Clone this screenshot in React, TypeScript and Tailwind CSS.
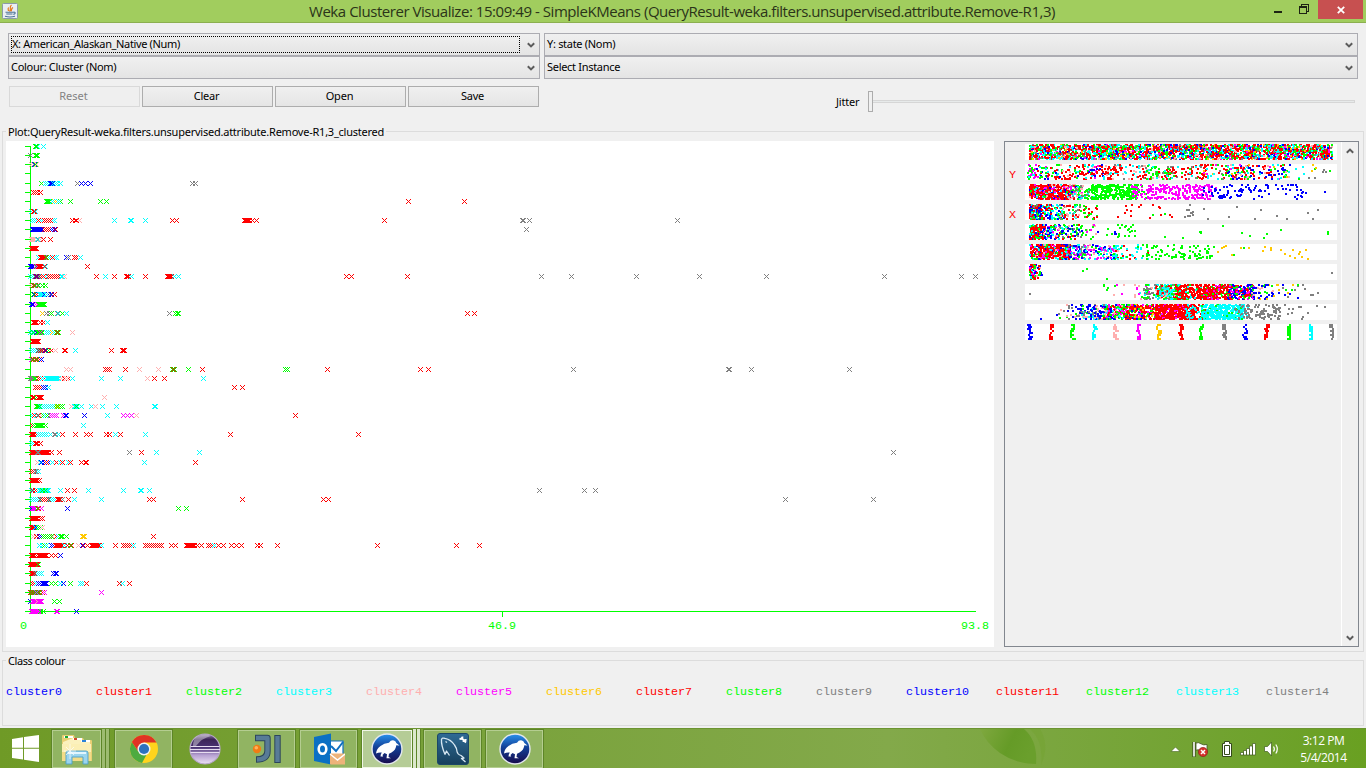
import React from 'react';

const COLOURS: Record<string, string> = {
  b: '#0000ff',
  r: '#ff0000',
  g: '#00ff00',
  c: '#00ffff',
  p: '#ffafaf',
  m: '#ff00ff',
  y: '#ffc800',
  k: '#808080',
};

// One entry per state. A letter is a colour; "c31-45" is a run with a step of 2, "r31~36" a solid run.
const ROWS: string[] = [
  'c37g35g36c43',
  'k30g35~37',
  'p31p33g35b34p36',
  '',
  'g41c45-49b50~52c53-57c60k77b81b85b90k192k195',
  'r33-37r40',
  'g46~49y54y56c52g60c58g70g100g106r408r464',
  'c31r33r34c35',
  'c32-54r38r44-51r72r75r76p79c114c130c131c145r172r176r244~249r252r256r384k522k523k529k677',
  'b32~42b46-54r44-48r55k526',
  'p31~34c37k38p40r43r50',
  'r31~36',
  'c38r40~45c48-57r52g46b66k68r74r76c80',
  'b30~33m35g36m37r38~41r44c45r87',
  'c30-38b36r35-41c45r43r48-58c61c62p64r96c105r114r126~128c131r145r167~170r171c174c178r346r351r407k541k571k636k699k766k884k961k975',
  'p31r33-36g34g38k37g42g45',
  'g33b34r36c39~43b44-48c46k50b51g54r54',
  'b31-35m35m37g38~44b32',
  'y42k46k49g51k57c58g62c66k169g175g177g178r467r474',
  'r33~36r40r43c47',
  'c30-38b36g33g37~42m40c46-50y52c54g56r57g58p72',
  'r32~38',
  'c31-39r38-47k41b45g48r51p55r64r65c75r111r122~124',
  'm31r33-39g32g36b41',
  'p66p70r105r107r109r125p139p158r173g172g174g188r202g285g287r327r420r428k573k728k729k751k849',
  'k30~33g35g34r38-44c42c46~58p61r64r68p66c72c101c120p147r154r164c203',
  'r35-43b43b45c48r234r242',
  'r32~34g36r38~41p104',
  'g36~40g42-58c40-52y57g62g60p71c74~77g76c81c91p95c102c116c154c155',
  'c32r34r38c37p41g43c45g47m50-57b66m63b65b84c107m123m127m131p136r295',
  'r32-38g34r40g36~42g45c83',
  'r31~34r36-47c38-46c50k54k55c58r62r75r86r90r106r109c115r120c145r230r358',
  'c31c33r35~37r40',
  'r31~48k37k38r51r59k129r141c156c199k893',
  'p37c40b41b44-48r46c52r56c60r62c68r70r81r85r86c144r195',
  'r31r33k35k36c38',
  'r31~37r39',
  'c31-37r32r35c39~48g42g45c60r67r74c88c123c140c141c149k539k584k595',
  'c31-39r40-48c49-55r57~60k62r68c74c101r149r153r242r323r328k785k873',
  'b31m32~35g37r38m41b67g178g186',
  'r31~37r40r42',
  'r31~34b36c35g38g40p42',
  'p33r36b39b41g43-51p52r56c58g60~62g66y82y83y84r153',
  'c39c42g44c46b51b53r55~62c64r67g70r71p78b82r83r87r91~99c101r115r123-134c133r145-161r171r175r186~194r197r201r208r210r212c214r218r223r231r236r241r257r260r277r377r456r479',
  'r31~34r36-40r39~46r51r55b60',
  'r30~37g38',
  'r31~34k35c37-42b53b55b56',
  'r32r34c36-42b38-47b43~46g51g55c60b63g70c80c82r86r119c122r129',
  'r30-38g31-39m36r42m44m101',
  'b30m32~36p37m38~41g54g59',
  'm31~38g40m39g43m56m57b76',
];

function expand(row: string): [string, number][] {
  const out: [string, number][] = [];
  for (const m of row.matchAll(/([a-z])(\d+)(?:([-~])(\d+))?/g)) {
    const from = Number(m[2]);
    const to = m[4] ? Number(m[4]) : from;
    const step = m[3] === '-' ? 2 : 1;
    for (let x = from; x <= to; x += step) out.push([m[1], x]);
  }
  return out;
}

const rowY = (i: number) => Math.floor(146.02 + i * 9.3);

function crossPath(x: number, y: number) {
  let d = '';
  for (let k = -2; k <= 2; k++) {
    d += `M${x + k} ${y + k}h1v1h-1z`;
    if (k !== 0) d += `M${x + k} ${y - k}h1v1h-1z`;
  }
  return d;
}

function Plot() {
  return (
    <svg className="block h-[506px] w-[988px] shrink-0 bg-white" viewBox="6 141 988 506" shapeRendering="crispEdges">
      <g fill="#00ff00">
        <rect x="30" y="146" width="1" height="466" />
        <rect x="30" y="611" width="946" height="1" />
        <rect x="502" y="611" width="1" height="6" />
        {ROWS.map((_, i) => (
          <rect key={i} x="25" y={rowY(i)} width="6" height="1" />
        ))}
      </g>
      {ROWS.map((row, i) => expand(row).map(([c, x], j) => <path key={`${i}-${j}`} fill={COLOURS[c]} d={crossPath(x, rowY(i))} />))}
      <g fill="#00ff00" fontFamily="'Liberation Mono', monospace" fontSize="11.7">
        <text x="20" y="629">0</text>
        <text x="488" y="629">46.9</text>
        <text x="961" y="629">93.8</text>
      </g>
    </svg>
  );
}

type Segment = [number, number, number, string];

const STRIPS: { label?: string; seed: number; segments: Segment[] }[] = [
  { seed: 3, segments: [[4, 308, 2400, 'rrrrrrrrccccgggbbmkpy']] },
  {
    label: 'Y',
    seed: 11,
    segments: [
      [2, 12, 30, 'mmmggc'], [10, 24, 28, 'gggbmrc'], [22, 70, 100, 'rrrrrccpgb'], [64, 80, 34, 'bmrcrr'], [76, 125, 95, 'rrrrcckp'],
      [118, 150, 60, 'gggrrckp'], [140, 182, 80, 'rrrrrcgk'], [178, 225, 80, 'ggcrrymk'], [200, 262, 90, 'rrrcpgmbb'], [244, 276, 22, 'rcgpyb'], [276, 308, 12, 'gckyc'],
    ],
  },
  {
    seed: 23,
    segments: [
      [4, 44, 400, 'rrrrrrrrrcpmgb'], [40, 58, 80, 'mgcpkbr'], [50, 72, 60, 'gggpck'], [66, 114, 260, 'g'], [106, 128, 50, 'mmmgm'],
      [124, 188, 190, 'm'], [176, 192, 12, 'mb'], [186, 245, 58, 'b'], [245, 282, 22, 'b'], [298, 301, 1, 'b'],
    ],
  },
  {
    label: 'X',
    seed: 37,
    segments: [[4, 16, 130, 'ggcrrkb'], [14, 40, 110, 'crrbcbg'], [34, 56, 52, 'rrcgkp'], [54, 78, 26, 'rrrg'], [80, 150, 18, 'rrrrrrg'], [158, 184, 12, 'k'], [184, 308, 9, 'k']],
  },
  {
    seed: 41,
    segments: [[4, 20, 160, 'rrrrrgcb'], [18, 36, 90, 'bbrpgcm'], [34, 58, 75, 'bbgggprkc'], [56, 72, 16, 'ppggm'], [72, 100, 8, 'gbg'], [92, 112, 18, 'g'], [110, 308, 13, 'g']],
  },
  {
    seed: 53,
    segments: [[4, 46, 400, 'rrrrrrrbcgpm'], [40, 62, 95, 'bbccgkm'], [58, 94, 120, 'bcccbgpm'], [88, 124, 44, 'cccggr'], [120, 190, 80, 'g'], [190, 225, 9, 'yyg'], [235, 286, 14, 'y']],
  },
  { seed: 61, segments: [[4, 11, 70, 'rrgcbgm'], [9, 18, 24, 'bbgpr'], [56, 59, 1, 'g'], [61, 64, 1, 'g'], [81, 84, 1, 'g'], [306, 309, 1, 'k']] },
  {
    seed: 71,
    segments: [
      [4, 6, 1, 'k'], [78, 112, 9, 'pggm'], [108, 126, 18, 'pgmpc'], [118, 150, 105, 'kkkpcg'], [130, 162, 155, 'cccrrgp'], [150, 182, 240, 'rrrrrrcg'],
      [178, 208, 240, 'rrrrrgmr'], [202, 230, 160, 'bbbrgrm'], [226, 250, 44, 'bbggyp'], [248, 276, 20, 'bbgyk'], [276, 308, 5, 'k'],
    ],
  },
  {
    seed: 83,
    segments: [
      [4, 40, 6, 'gbkp'], [38, 60, 26, 'bbgpk'], [54, 86, 125, 'bbbbgpkc'], [78, 106, 200, 'gggrbmpc'], [100, 136, 260, 'rrrmbrgy'], [130, 170, 440, 'rrrrrrrrm'],
      [160, 182, 100, 'rrcc'], [176, 220, 330, 'cccccccccccccccg'], [208, 226, 34, 'ckkc'], [216, 256, 80, 'k'], [256, 304, 12, 'k'],
    ],
  },
  {
    seed: 97,
    segments: [],
  },
];

function random(seed: number) {
  let a = seed * 7919;
  return () => {
    a = (a + 0x6d2b79f5) | 0;
    let t = Math.imul(a ^ (a >>> 15), 1 | a);
    t = (t + Math.imul(t ^ (t >>> 7), 61 | t)) ^ t;
    return ((t ^ (t >>> 14)) >>> 0) / 4294967296;
  };
}

function stripDots(index: number): [string, number, number][] {
  const { seed, segments } = STRIPS[index];
  const rnd = random(seed);
  const dots: [string, number, number][] = [];
  for (const [from, to, count, palette] of segments) {
    for (let n = 0; n < count; n++) {
      dots.push([palette[Math.floor(rnd() * palette.length)], Math.floor(from + rnd() * (to - from - 1)), Math.floor(rnd() * 15)]);
    }
  }
  if (segments.length === 0) {
    'brgcpmyrgkbrgck'.split('').forEach((c, i) => {
      const x = 4 + Math.round(i * 21.5);
      let drift = 0;
      for (let y = 0; y < 16; y += 2) {
        drift = Math.max(-2, Math.min(2, drift + Math.floor(rnd() * 5) - 2));
        dots.push([c, x + drift, y]);
        if (rnd() > 0.45) dots.push([c, x + (drift > 0 ? drift - 2 : drift + 2), y]);
      }
    });
  }
  return dots;
}

function Strip({ index }: { index: number }) {
  const byColour = new Map<string, string>();
  const order: React.ReactNode[] = [];
  stripDots(index).forEach(([c, x, y], i) => {
    byColour.set(c, (byColour.get(c) ?? '') + `M${x} ${y}h2v2h-2z`);
    if (i % 25 === 24) {
      byColour.forEach((d, k) => order.push(<path key={`${i}${k}`} fill={COLOURS[k]} d={d} />));
      byColour.clear();
    }
  });
  byColour.forEach((d, k) => order.push(<path key={`end${k}`} fill={COLOURS[k]} d={d} />));
  return (
    <div className="flex h-5 items-start">
      <span className="w-5 pl-1 pt-[4px] font-['Liberation_Mono',monospace] text-[11.7px] leading-[15px] text-[#ff0000]">{STRIPS[index].label}</span>
      <svg className="block h-4 w-[312px] bg-white" viewBox="0 0 312 16" shapeRendering="crispEdges">
        {order}
      </svg>
    </div>
  );
}

function Chevron({ up }: { up?: boolean }) {
  return (
    <svg className="block h-[6px] w-[8px]" viewBox="0 0 8 6">
      <path d={up ? 'M0.8 4.8L4 1.6L7.2 4.8' : 'M0.8 1.2L4 4.4L7.2 1.2'} fill="none" stroke="#5c5c5c" strokeWidth="2" />
    </svg>
  );
}

function Combo({ text, focused }: { text: string; focused?: boolean }) {
  return (
    <div className="flex h-[23px] items-center justify-between border border-[#acacb2] bg-linear-to-b from-[#f0f0f0] to-[#e4e4e4] pl-[2px] pr-[4px]">
      <span
        className={
          focused
            ? 'mr-[7px] h-[17px] flex-1 border border-dotted border-black text-[11px] leading-[13px] tracking-[-0.36px]'
            : 'h-[17px] flex-1 text-[11px] leading-[15px] tracking-[-0.3px]'
        }
      >
        {text}
      </span>
      <Chevron />
    </div>
  );
}

function Button({ text, disabled }: { text: string; disabled?: boolean }) {
  return (
    <button
      className={
        disabled
          ? 'h-[21px] w-[131px] border border-[#d9d9d9] bg-[#efefef] pr-[2px] pb-[2px] text-[11px] leading-[17px] text-[#838383]'
          : 'h-[21px] w-[131px] border border-[#adadad] bg-linear-to-b from-[#f0f0f0] to-[#e5e5e5] pr-[2px] pb-[2px] text-[11px] leading-[17px] tracking-[-0.2px] text-black'
      }
    >
      {text}
    </button>
  );
}

const CLUSTERS: [string, string][] = [
  ['cluster0', 'text-[#0000ff]'], ['cluster1', 'text-[#ff0000]'], ['cluster2', 'text-[#00ff00]'], ['cluster3', 'text-[#00ffff]'], ['cluster4', 'text-[#ffafaf]'],
  ['cluster5', 'text-[#ff00ff]'], ['cluster6', 'text-[#ffc800]'], ['cluster7', 'text-[#ff0000]'], ['cluster8', 'text-[#00ff00]'], ['cluster9', 'text-[#808080]'],
  ['cluster10', 'text-[#0000ff]'], ['cluster11', 'text-[#ff0000]'], ['cluster12', 'text-[#00ff00]'], ['cluster13', 'text-[#00ffff]'], ['cluster14', 'text-[#808080]'],
];

function JavaIcon() {
  return (
    <svg className="h-4 w-4" viewBox="0 0 16 16">
      <rect x=".5" y=".5" width="15" height="15" rx="1" fill="#e9eef3" stroke="#8b9aa8" />
      <path d="M9.5 2C6.5 4.5 10 5 7.5 8.5M11 4.5C8.5 6 10.5 6.5 8.8 8.3M6.6 4.5C5.5 6 6.5 6.5 6.4 8" fill="none" stroke="#e67817" strokeWidth="1.2" />
      <path d="M3.5 9.3h8M4.3 11h6.2M3 13.2c3 .9 7 .9 10 0M11.5 9.2c2.6-.4 2 2-.3 2" fill="none" stroke="#4b7396" strokeWidth="1.1" />
    </svg>
  );
}

function TitleBar() {
  return (
    <header className="relative flex h-[23px] items-start border-b border-[#8cb050] bg-[#a1cd5e]">
      <div className="pl-[2px] pt-[3px]">
        <JavaIcon />
      </div>
      <h1 className="w-[1330px] pl-[291px] font-['Open_Sans',sans-serif] text-[15px] leading-[23px] tracking-[-0.452px] whitespace-nowrap text-[#2b3419]">
        Weka Clusterer Visualize: 15:09:49 - SimpleKMeans (QueryResult-weka.filters.unsupervised.attribute.Remove-R1,3)
      </h1>
      <div className="absolute top-0 right-[3px] flex h-[19px]">
        <svg className="block h-[19px] w-[48px]" viewBox="0 0 48 19" shapeRendering="crispEdges">
          <path d="M4 11h8v2h-8z" fill="#1d2413" />
          <path d="M29 6h7v7h-7zM31 6v-2h7v7h-2" transform="translate(.5 .5)" fill="none" stroke="#1d2413" />
          <path d="M29 6h8v2h-8z" fill="#1d2413" />
        </svg>
        <div className="flex h-[19px] w-[45px] items-center justify-center bg-[#c75050]">
          <svg className="h-[8px] w-[8px]" viewBox="0 0 8 8">
            <path d="M.8.8l6.4 6.4M7.2.8L.8 7.2" stroke="#fff" strokeWidth="1.8" />
          </svg>
        </div>
      </div>
    </header>
  );
}

function ExplorerIcon() {
  return (
    <svg className="h-8 w-8" viewBox="0 0 32 32">
      <path d="M1 28V3q0-1 1-1h11l1 3h8l1 2h7q1 0 1 1v20z" fill="#e9cf74" />
      <path d="M2 9l10-4 17 4v19H2z" fill="#fbf1bd" />
      <path d="M3 4h9M12 6h9M20 8h9" stroke="#fff" strokeWidth="2" />
      <path d="M4 3h3v2H4z" fill="#18a832" />
      <path d="M13 5h3v2h-3z" fill="#d34b2c" />
      <path d="M21 7h4v2h-4z" fill="#2a83d8" />
      <path d="M1 11h29v17H1z" fill="#f3dc88" />
      <path d="M1 11h29v8H1z" fill="#fbefb5" />
      <path d="M5 31V20q0-2 2-2h18q2 0 2 2v11h-5v-7H11v7z" fill="#9bd5ee" stroke="#4c9fc7" strokeWidth=".9" />
      <path d="M7 20h18" stroke="#e2f6ff" strokeWidth="2" />
      <path d="M9 11v15M3 18h12M5 14l8 8M13 14l-8 8" stroke="#fff" strokeWidth=".8" opacity=".85" />
    </svg>
  );
}

function ChromeIcon() {
  return (
    <svg className="h-[30px] w-[30px]" viewBox="0 0 30 30">
      <circle cx="15" cy="15" r="14" fill="#ffd41d" />
      <path d="M2.9 8A14 14 0 0 0 13 28.9L19 18L9 17z" fill="#4dab3f" />
      <path d="M2.9 8A14 14 0 0 1 27.5 8.6H15L9 17z" fill="#df3325" />
      <circle cx="15" cy="15" r="6.5" fill="#f2f4f2" />
      <circle cx="15" cy="15" r="5.1" fill="#2c72bf" />
    </svg>
  );
}

function EclipseIcon() {
  return (
    <svg className="h-8 w-8" viewBox="0 0 32 32">
      <defs>
        <linearGradient id="ecl" x1="0" y1="0" x2="0" y2="1">
          <stop offset="0" stopColor="#9a86b0" />
          <stop offset=".18" stopColor="#3c2557" />
          <stop offset=".45" stopColor="#4b3374" />
          <stop offset=".7" stopColor="#b6a0d2" />
          <stop offset="1" stopColor="#ece2f4" />
        </linearGradient>
      </defs>
      <circle cx="16" cy="16" r="15" fill="url(#ecl)" stroke="#b7a6c9" strokeWidth="1.2" />
      <path d="M8 3.5Q16 0 22 3Q13 5 7 13H4Q4 6 8 3.5z" fill="#fff" opacity=".4" />
      <path d="M1.5 13.5h29M1 16.5h30M1.5 19.5h29" stroke="#e7ddf0" strokeWidth="1" />
    </svg>
  );
}

function IdeaIcon() {
  return (
    <svg className="h-8 w-8" viewBox="0 0 32 32">
      <g fill="none" strokeLinejoin="round">
        <path d="M4 5H16.5V18q0 8.5-11.5 8.5" stroke="#2c465c" strokeWidth="6.4" />
        <path d="M26.5 2v28" stroke="#2c465c" strokeWidth="6.4" />
        <path d="M5 5H16.5V18q0 8.5-10.5 8.5" stroke="#587b97" strokeWidth="4.4" />
        <path d="M26.5 3v26" stroke="#587b97" strokeWidth="4.4" />
      </g>
      <circle cx="6" cy="16" r="4.2" fill="#f07c14" />
      <circle cx="5.3" cy="14.8" r="1.8" fill="#ffb25c" />
    </svg>
  );
}

function OutlookIcon() {
  return (
    <svg className="h-8 w-8" viewBox="0 0 32 32">
      <path d="M16 8h14v15H16z" fill="#fff" stroke="#0f6fc1" strokeWidth="1.2" />
      <path d="M18 13l5 5 7-9" fill="none" stroke="#0f6fc1" strokeWidth="2" />
      <path d="M1 4L18 .5v31L1 28z" fill="#0a70c4" />
      <ellipse cx="9.5" cy="16" rx="3.8" ry="4.8" fill="none" stroke="#fff" strokeWidth="2.6" />
      <path d="M17 20.5h15v11H17z" fill="#edb37a" />
      <path d="M17 21l7.5 6 7.5-6" fill="none" stroke="#fff" strokeWidth="1.4" />
    </svg>
  );
}

function WekaIcon() {
  return (
    <svg className="h-8 w-8" viewBox="0 0 32 32">
      <defs>
        <linearGradient id="weka" x1="0" y1="0" x2="0" y2="1">
          <stop offset="0" stopColor="#2a92ee" />
          <stop offset=".45" stopColor="#123f96" />
          <stop offset="1" stopColor="#180a4c" />
        </linearGradient>
      </defs>
      <circle cx="16" cy="16" r="15" fill="url(#weka)" stroke="#e4e8ee" strokeWidth="1.4" />
      <path
        d="M5 20.5Q5.5 15.5 9.5 13Q13 10 18 9.7Q19.8 6.7 23 7.4Q25 8.2 25.3 9.9L28.5 12.5L25.3 12.3Q25 17 20.5 19.5L18 20.8L17.5 24L20 25.3H15.5L16 21.2L13.5 20L11.5 22L12.2 23.4H9.5L9.8 21.5L10.8 19.5Q8 19 5 20.5z"
        fill="#fff"
      />
    </svg>
  );
}

function MysqlIcon() {
  return (
    <svg className="h-8 w-8" viewBox="0 0 32 32">
      <defs>
        <linearGradient id="mysql" x1="0" y1="0" x2="0" y2="1">
          <stop offset="0" stopColor="#2f6b95" />
          <stop offset="1" stopColor="#173f5c" />
        </linearGradient>
      </defs>
      <rect x=".5" y=".5" width="31" height="31" rx="2.5" fill="url(#mysql)" stroke="#1c4767" />
      <path
        d="M8 21.5Q4 12 4.5 6.5Q5 4.5 8 5.3Q14 6.5 17.5 12Q20 15.5 20 18.5Q20.5 21.5 24 22.5L27 25L24.5 25.5L28.5 29M8 21.5L9.5 18L12.5 22.5M8.5 8.5L10 9.5"
        fill="none"
        stroke="#d8e8f3"
        strokeWidth="1.3"
        strokeLinejoin="round"
      />
      <path d="M24 4.5l5 5M22.5 5.5q3 1.5 3-2M26.5 9q0-2.5 3-2" stroke="#fff" strokeWidth="1.9" fill="none" />
    </svg>
  );
}

const TASK = 'flex h-10 items-center justify-center border border-[#5d8527] bg-[#91b462] shadow-[inset_0_0_0_1px_#b4cd90]';
const TASK_ACTIVE = 'flex h-10 items-center justify-center border border-[#5d8527] bg-[#b5cc96] shadow-[inset_0_0_0_1px_#f0f6e6]';

function Tray() {
  return (
    <svg className="mr-[20px] block h-5 w-[110px]" viewBox="1170 739 110 20">
      <path d="M1171 751.5l4.5-4.5 4.5 4.5z" fill="#fff" stroke="#47661f" strokeWidth=".6" />
      <path d="M1194 742v15" stroke="#40561f" strokeWidth="3.4" />
      <path d="M1194 742v14.5" stroke="#fff" strokeWidth="1.6" />
      <path d="M1196 743q2.5-1 5 .8t6 .7v7q-3 .8-6-.8t-5-.5z" fill="#fff" stroke="#40561f" strokeWidth=".8" />
      <circle cx="1203" cy="752" r="4.6" fill="#d5312c" stroke="#8e2420" strokeWidth=".7" />
      <path d="M1201 750l4 4M1205 750l-4 4" stroke="#fff" strokeWidth="1.5" />
      <path d="M1224.5 741.5h5v2h2v13h-9v-13h2z" fill="#fff" stroke="#34491a" />
      <path d="M1224.5 745.5h5v9h-5z" fill="#fff" stroke="#34491a" />
      <g fill="#fff" stroke="#3f5a1e" strokeWidth=".7">
        <path d="M1240.5 752.5h3v2.5h-3zM1243.5 750.5h3v4.5h-3zM1246.5 748.5h3v6.5h-3zM1249.5 746h3v9h-3zM1252.5 743.5h3v11.5h-3z" />
        <path d="M1264.5 746.5h3l4-4.5v14l-4-4.5h-3z" />
      </g>
      <path d="M1273.5 746.5q1.7 2.5 0 5M1275.8 744.5q3 4.5 0 9" fill="none" stroke="#fff" strokeWidth="1.2" />
    </svg>
  );
}

function Taskbar() {
  return (
    <footer className="relative flex h-10 shrink-0 items-center overflow-hidden border-t border-[#6c9431] bg-linear-to-r from-[#6f9a26] via-[#83a94a] via-65% to-[#69a021] font-['Open_Sans',sans-serif]">
      <svg className="absolute top-0 left-[970px] h-10 w-[100px]" viewBox="0 0 100 40">
        <defs>
          <linearGradient id="leaf" x1="0" y1="0" x2="1" y2="0.3">
            <stop offset="0" stopColor="#7fa83f" />
            <stop offset=".6" stopColor="#659b27" />
            <stop offset="1" stopColor="#6a9f2c" />
          </linearGradient>
        </defs>
        <path d="M10 0Q16 14 30 24Q46 35 66 35Q68 12 54 0z" fill="url(#leaf)" />
        <path d="M60 0Q74 12 71 36Q80 16 70 0z" fill="#74a434" opacity=".6" />
      </svg>
      <div className="flex w-[51px] justify-center">
        <svg className="block h-[27px] w-[27px]" viewBox="0 0 27 27">
          <path d="M0 4L11 2.3V12.8H0zM12 2.1L27 0V12.8H12zM0 13.8H11V24.5L0 22.9zM12 13.8H27V27L12 24.7z" fill="#fff" />
        </svg>
      </div>
      <div className="flex w-[63px]">
        <div className={`${TASK} w-[51px]`}><ExplorerIcon /></div>
        <div className="h-10 w-1 border-r border-[#5d8527] bg-[#9dbb70]" />
        <div className="h-10 w-1 border-r border-[#5d8527] bg-[#9dbb70]" />
      </div>
      <div className={`${TASK} w-[59px]`}><ChromeIcon /></div>
      <div className="flex w-[64px] justify-center"><EclipseIcon /></div>
      <div className={`${TASK} mr-[3px] w-[59px]`}><IdeaIcon /></div>
      <div className={`${TASK} mr-[3px] w-[59px]`}><OutlookIcon /></div>
      <div className="flex w-[62px]">
        <div className={`${TASK_ACTIVE} w-[52px]`}><WekaIcon /></div>
        <div className="h-10 w-1 border-r border-[#5d8527] bg-[#dce8cb]" />
        <div className="h-10 w-1 border-r border-[#5d8527] bg-[#dce8cb]" />
      </div>
      <div className={`${TASK} mr-[3px] w-[59px]`}><MysqlIcon /></div>
      <div className={`${TASK} w-[59px]`}><WekaIcon /></div>
      <div className="flex-1" />
      <Tray />
      <div className="mr-[19px] w-[47px] text-center text-[12px] leading-[17px] tracking-[-0.45px] whitespace-nowrap text-white">
        <div>3:12 PM</div>
        <div>5/4/2014</div>
      </div>
    </footer>
  );
}

export default function App() {
  return (
    <div className="flex h-[768px] w-[1366px] flex-col overflow-hidden bg-[#f0f0f0] font-['Noto_Sans',sans-serif] text-[11px] text-black">
      <TitleBar />
      <section className="grid grid-cols-[532px_814px] gap-x-1 pt-[10px] pl-2">
        <Combo text="X: American_Alaskan_Native (Num)" focused />
        <Combo text="Y: state (Nom)" />
        <Combo text="Colour: Cluster (Nom)" />
        <Combo text="Select Instance" />
      </section>
      <section className="flex h-[45px] items-start pt-[7px] pl-[9px]">
        <div className="flex w-[827px] gap-[2px]">
          <Button text="Reset" disabled />
          <Button text="Clear" />
          <Button text="Open" />
          <Button text="Save" />
        </div>
        <div className="flex items-center pt-[5px]">
          <span className="w-8 leading-[21px] tracking-[-0.2px]">Jitter</span>
          <div className="h-[21px] w-[5px] border border-[#acacac] bg-[#f0f0f0]" />
          <div className="h-[3px] w-[482px] border border-l-0 border-[#d6d6d6] bg-[#e7eaea]" />
        </div>
      </section>
      <fieldset className="mx-[2px] h-[528px] min-w-0 border border-[#dcdcdc] pl-[3px]">
        <legend className="px-[2px] leading-[15px] tracking-[-0.235px] whitespace-nowrap">Plot:QueryResult-weka.filters.unsupervised.attribute.Remove-R1,3_clustered</legend>
        <div className="flex gap-[10px] pt-[2px]">
          <Plot />
          <div className="flex h-[506px] w-[355px] border border-[#82878f]">
            <div className="w-[336px] pt-[2px]">
              {STRIPS.map((_, i) => (
                <Strip key={i} index={i} />
              ))}
            </div>
            <div className="flex flex-1 flex-col items-center justify-between border-l border-white pt-[6px] pr-[1px] pb-[5px]">
              <Chevron up />
              <Chevron />
            </div>
          </div>
        </div>
      </fieldset>
      <fieldset className="mx-[2px] mt-[1px] h-[73px] min-w-0 border border-[#dcdcdc] pl-[3px]">
        <legend className="px-[2px] leading-[15px] tracking-[-0.42px]">Class colour</legend>
        <div className="flex pt-[17px] font-['Liberation_Mono',monospace] text-[11.7px] leading-[15px]">
          {CLUSTERS.map(([name, colour]) => (
            <span key={name} className={`w-[90px] shrink-0 ${colour}`}>
              {name}
            </span>
          ))}
        </div>
      </fieldset>
      <div className="flex-1" />
      <Taskbar />
    </div>
  );
}
